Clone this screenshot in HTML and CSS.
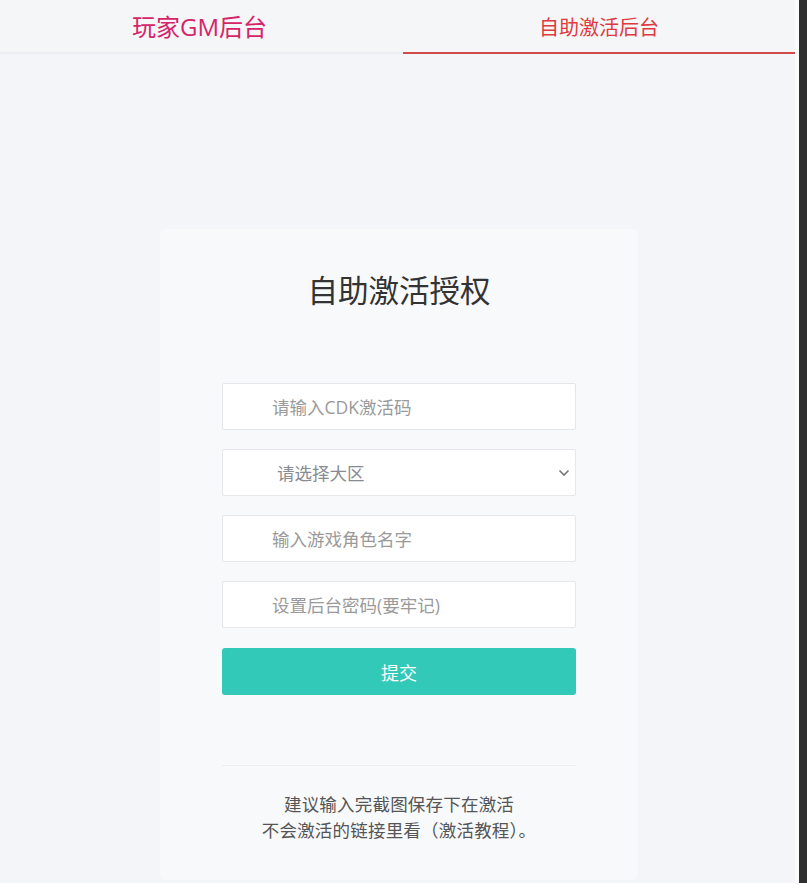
FILE: index.html
```html
<!DOCTYPE html>
<html lang="zh-CN">
<head>
<meta charset="utf-8">
<title>自助激活后台</title>
<link rel="stylesheet" href="styles.css">
</head>
<body>
<div class="shell">
  <div class="page">
    <nav class="tabs">
      <a class="tab tab-brand">玩家GM后台</a>
      <a class="tab tab-active">自助激活后台</a>
    </nav>
    <main class="main">
      <section class="card">
        <h1 class="title">自助激活授权</h1>
        <form class="form">
          <input class="field" type="text" placeholder="请输入CDK激活码">
          <div class="select-wrap">
            <select class="field select">
              <option>请选择大区</option>
            </select>
            <svg class="chevron" width="12" height="8" viewBox="0 0 12 8"><path d="M1.5 1.5 L6 6 L10.5 1.5" fill="none" stroke="#777" stroke-width="1.6"/></svg>
          </div>
          <input class="field" type="text" placeholder="输入游戏角色名字">
          <input class="field" type="password" placeholder="设置后台密码(要牢记)">
          <button class="submit" type="button">提交</button>
        </form>
        <hr class="divider">
        <p class="note">建议输入完截图保存下在激活<br>不会激活的链接里看（激活教程）。</p>
      </section>
    </main>
  </div>
  <div class="gutter"></div>
  <div class="scrollbar"></div>
</div>
</body>
</html>
```

FILE: styles.css
```css
html, body {
  margin: 0;
  padding: 0;
  background: #ffffff;
}
body {
  font-family: "Open Sans", "Noto Sans CJK SC", sans-serif;
}
.shell {
  display: flex;
  height: 883px;
}
.page {
  width: 795px;
  background: #f3f5f8;
  display: flex;
  flex-direction: column;
}
.gutter {
  width: 4px;
  background: #fbfbfc;
}
.scrollbar {
  width: 8px;
  background: #2f2f2f;
}
.tabs {
  display: flex;
  height: 52px;
  border-bottom: 2px solid #eceef1;
  background: #f5f6f8;
}
.tab {
  display: flex;
  align-items: center;
  justify-content: center;
  text-decoration: none;
  cursor: pointer;
}
.tab-brand {
  width: 403px;
  color: #d62468;
  font-size: 24px;
  padding-bottom: 2px;
  padding-right: 4px;
  box-sizing: border-box;
}
.tab-active {
  flex: 1;
  color: #e0393e;
  font-size: 20px;
  margin-bottom: -2px;
  border-bottom: 2px solid #d24a4a;
}
.main {
  flex: 1;
  display: flex;
  justify-content: center;
  padding-top: 175px;
  padding-left: 3px;
}
.card {
  width: 478px;
  height: 651px;
  box-sizing: border-box;
  background: #f8f9fb;
  border-radius: 6px;
  padding: 42px 62px 0;
  display: flex;
  flex-direction: column;
  align-items: stretch;
}
.title {
  margin: 0;
  text-align: center;
  font-size: 30.5px;
  line-height: 38px;
  font-weight: 400;
  color: #333333;
}
.form {
  margin-top: 74px;
  display: flex;
  flex-direction: column;
  gap: 19px;
}
.field {
  display: block;
  width: 354px;
  height: 47px;
  box-sizing: border-box;
  border: 1px solid #e6e7ea;
  border-radius: 2px;
  background: #ffffff;
  padding: 0 12px 0 49px;
  font-family: inherit;
  font-size: 17.5px;
  color: #555;
  outline: none;
}
.field::placeholder {
  color: #9a9a9a;
}
.select-wrap {
  position: relative;
}
.select {
  appearance: none;
  -webkit-appearance: none;
  padding-left: 54px;
  color: #888b90;
}
.chevron {
  position: absolute;
  right: 6px;
  top: 20px;
  pointer-events: none;
}
.submit {
  margin-top: 1px;
  height: 47px;
  width: 354px;
  border: none;
  border-radius: 3px;
  background: #33c9b9;
  color: #ffffff;
  font-family: inherit;
  font-size: 18px;
  cursor: pointer;
}
.divider {
  margin: 70px 0 0;
  border: none;
  border-top: 1px solid #eceef0;
  height: 0;
}
.note {
  margin: 25px 0 0;
  text-align: center;
  font-size: 17.5px;
  line-height: 26px;
  color: #555555;
  letter-spacing: 0.2px;
}
```
